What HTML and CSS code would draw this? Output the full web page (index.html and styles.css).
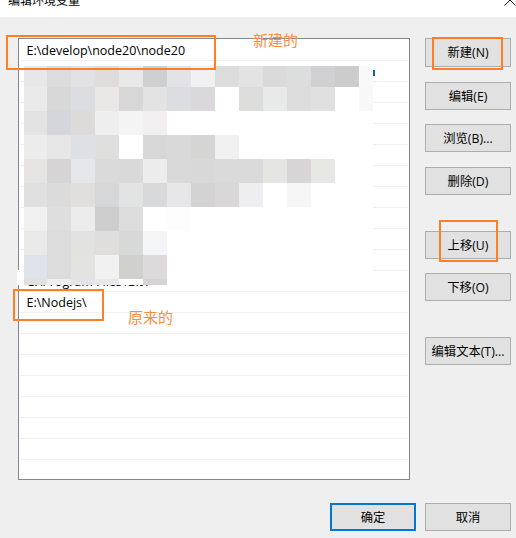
FILE: index.html
```html
<!DOCTYPE html>
<html lang="zh-CN">
<head>
<meta charset="utf-8">
<title>编辑环境变量</title>
<link rel="stylesheet" href="styles.css">
</head>
<body>
<div class="page">
  <header class="titlebar">
    <span class="title">编辑环境变量</span>
    <svg class="close" width="12" height="6" viewBox="0 0 12 6" aria-hidden="true"><path d="M0.5 5.5 L6 0 L11.5 5.5" fill="none" stroke="#111" stroke-width="1"/></svg>
  </header>
  <main class="dialog">
    <div class="content">
      <div class="list">
        <div class="row">E:\develop\node20\node20</div>
        <div class="row"></div><div class="row"></div><div class="row"></div><div class="row"></div><div class="row"></div>
        <div class="row"></div><div class="row"></div><div class="row"></div><div class="row"></div><div class="row"></div>
        <div class="row">C:\Program Files\Git\</div>
        <div class="row">E:\Nodejs\</div>
        <div class="row"></div><div class="row"></div><div class="row"></div><div class="row"></div><div class="row"></div><div class="row"></div><div class="row"></div>
      </div>
      <div class="actions">
        <button class="btn first">新建(N)</button>
        <button class="btn gap-15">编辑(E)</button>
        <button class="btn gap-14">浏览(B)...</button>
        <button class="btn gap-15">删除(D)</button>
        <button class="btn gap-36">上移(U)</button>
        <button class="btn gap-14">下移(O)</button>
        <button class="btn gap-36">编辑文本(T)...</button>
      </div>
    </div>
    <footer class="footer">
      <button class="btn primary">确定</button>
      <button class="btn">取消</button>
    </footer>
  </main>

  <svg class="mosaic" width="358" height="219" viewBox="17 66 358 219" shape-rendering="crispEdges" aria-hidden="true">
    <rect x="24" y="66" width="349" height="219" fill="#fff"/>
    <rect x="17" y="270" width="7" height="15" fill="#fff"/>
    <rect x="373" y="70" width="2" height="6" fill="#1f5f9a"/>
    <g>
      <rect x="24" y="66" width="23" height="21" fill="#e7e7e7"/><rect x="47" y="66" width="24" height="21" fill="#dcdcdc"/><rect x="71" y="66" width="24" height="21" fill="#e1e1e3"/><rect x="95" y="66" width="24" height="21" fill="#e0dcdc"/><rect x="119" y="66" width="24" height="21" fill="#e8e8e8"/><rect x="143" y="66" width="24" height="21" fill="#cdcfd0"/><rect x="167" y="66" width="24" height="21" fill="#e3e3e5"/><rect x="191" y="66" width="24" height="21" fill="#f1f1f1"/><rect x="215" y="66" width="24" height="21" fill="#dcdcdc"/><rect x="239" y="66" width="24" height="21" fill="#e3e3e3"/><rect x="263" y="66" width="24" height="21" fill="#dadada"/><rect x="287" y="66" width="24" height="21" fill="#dcdedd"/><rect x="311" y="66" width="24" height="21" fill="#d1d1d3"/><rect x="335" y="66" width="24" height="21" fill="#cccccc"/><rect x="359" y="66" width="14" height="21" fill="#f9f9f9"/>
    </g>
    <g>
      <rect x="24" y="87" width="23" height="24" fill="#eaeaea"/><rect x="47" y="87" width="24" height="24" fill="#d8d8d8"/><rect x="71" y="87" width="24" height="24" fill="#dcdde0"/><rect x="95" y="87" width="24" height="24" fill="#e9e8e6"/><rect x="119" y="87" width="24" height="24" fill="#d7d7d7"/><rect x="143" y="87" width="24" height="24" fill="#e3e3e3"/><rect x="167" y="87" width="24" height="24" fill="#dcdde0"/><rect x="191" y="87" width="24" height="24" fill="#dad8db"/><rect x="239" y="87" width="24" height="24" fill="#dcdcda"/><rect x="263" y="87" width="24" height="24" fill="#e8eae9"/><rect x="287" y="87" width="24" height="24" fill="#dcdcdc"/><rect x="311" y="87" width="24" height="24" fill="#e0e0e0"/><rect x="359" y="87" width="14" height="24" fill="#f8f8f8"/>
    </g>
    <g>
      <rect x="24" y="111" width="23" height="24" fill="#e3e3e3"/><rect x="47" y="111" width="24" height="24" fill="#d5d6d9"/><rect x="71" y="111" width="24" height="24" fill="#dcdbd9"/><rect x="95" y="111" width="24" height="24" fill="#eeeeee"/><rect x="119" y="111" width="24" height="24" fill="#f4f4f4"/><rect x="143" y="111" width="24" height="24" fill="#f1eff0"/>
    </g>
    <g>
      <rect x="24" y="135" width="23" height="24" fill="#ececec"/><rect x="47" y="135" width="24" height="24" fill="#e6e6e6"/><rect x="71" y="135" width="24" height="24" fill="#dee0e3"/><rect x="95" y="135" width="24" height="24" fill="#dfdfdd"/><rect x="143" y="135" width="24" height="24" fill="#d7d7d7"/><rect x="167" y="135" width="24" height="24" fill="#d9d9d9"/><rect x="191" y="135" width="24" height="24" fill="#d5d5d3"/><rect x="215" y="135" width="24" height="24" fill="#f0f0f0"/>
    </g>
    <g>
      <rect x="24" y="159" width="23" height="24" fill="#e6e5e3"/><rect x="47" y="159" width="24" height="24" fill="#d6d4d5"/><rect x="71" y="159" width="24" height="24" fill="#e4e6e9"/><rect x="95" y="159" width="24" height="24" fill="#dadada"/><rect x="119" y="159" width="24" height="24" fill="#d9d9d9"/><rect x="143" y="159" width="24" height="24" fill="#ececec"/><rect x="167" y="159" width="24" height="24" fill="#d9d9d9"/><rect x="191" y="159" width="24" height="24" fill="#d8d8d8"/><rect x="215" y="159" width="24" height="24" fill="#dadada"/><rect x="239" y="159" width="24" height="24" fill="#dadada"/><rect x="263" y="159" width="24" height="24" fill="#e5e5e3"/><rect x="287" y="159" width="24" height="24" fill="#d7d5d6"/><rect x="311" y="159" width="24" height="24" fill="#e7e8e3"/>
    </g>
    <g>
      <rect x="24" y="183" width="23" height="24" fill="#e0e0e0"/><rect x="47" y="183" width="24" height="24" fill="#dbdbdb"/><rect x="71" y="183" width="24" height="24" fill="#e0dfdd"/><rect x="95" y="183" width="24" height="24" fill="#d6d7d9"/><rect x="119" y="183" width="24" height="24" fill="#e2e4e3"/><rect x="143" y="183" width="24" height="24" fill="#d8d9db"/><rect x="167" y="183" width="24" height="24" fill="#e6e6e8"/><rect x="191" y="183" width="24" height="24" fill="#d3d3d3"/><rect x="215" y="183" width="24" height="24" fill="#d9d7d8"/><rect x="239" y="183" width="24" height="24" fill="#eeeef0"/><rect x="287" y="183" width="24" height="24" fill="#f6f6f6"/>
    </g>
    <g>
      <rect x="24" y="207" width="23" height="24" fill="#f0f0f0"/><rect x="47" y="207" width="24" height="24" fill="#dedede"/><rect x="71" y="207" width="24" height="24" fill="#ebebeb"/><rect x="95" y="207" width="24" height="24" fill="#cdcdcd"/><rect x="119" y="207" width="24" height="24" fill="#dcdcdc"/><rect x="167" y="207" width="24" height="24" fill="#fdfdfd"/>
    </g>
    <g>
      <rect x="24" y="231" width="23" height="24" fill="#eaeae8"/><rect x="47" y="231" width="24" height="24" fill="#dcdcdc"/><rect x="71" y="231" width="24" height="24" fill="#e2e2e0"/><rect x="95" y="231" width="24" height="24" fill="#dfdedc"/><rect x="119" y="231" width="24" height="24" fill="#d7d9d8"/><rect x="143" y="231" width="24" height="24" fill="#f4f5f7"/>
    </g>
    <g>
      <rect x="24" y="255" width="23" height="24" fill="#dfe4ea"/><rect x="47" y="255" width="24" height="24" fill="#dcdcdc"/><rect x="71" y="255" width="24" height="24" fill="#e3e3e1"/><rect x="95" y="255" width="24" height="24" fill="#f1f1f1"/><rect x="119" y="255" width="24" height="24" fill="#d0d0ce"/><rect x="143" y="255" width="24" height="24" fill="#dcdadb"/>
    </g>
    <g>
      <rect x="24" y="279" width="23" height="6" fill="#e3e0dd"/><rect x="47" y="279" width="24" height="6" fill="#eeeeee"/><rect x="71" y="279" width="24" height="6" fill="#e4e4e8"/><rect x="95" y="279" width="24" height="6" fill="#e8e8e8"/><rect x="143" y="279" width="24" height="6" fill="#d6d4d5"/>
    </g>
  </svg>

  <div class="mark mark-path"></div>
  <div class="mark mark-new"></div>
  <div class="mark mark-up"></div>
  <div class="mark mark-old"></div>
  <span class="note note-new">新建的</span>
  <span class="note note-old">原来的</span>
</div>
</body>
</html>
```
FILE: styles.css
```css
* { box-sizing: border-box; }
html, body { margin: 0; padding: 0; }
body { font-family: "Open Sans", "Noto Sans CJK SC", sans-serif; font-size: 12px; color: #000; background: #efefef; }
.page { position: relative; width: 516px; height: 538px; overflow: hidden; display: flex; flex-direction: column; }

.titlebar { height: 17px; flex: none; background: #fff; display: flex; justify-content: space-between; align-items: flex-start; padding: 0 0 0 8px; overflow: hidden; }
.title { display: block; line-height: 16px; margin-top: -7px; }
.close { display: block; flex: none; }

.dialog { flex: 1; background: #efefef; padding: 21px 5px 7px 18px; display: flex; flex-direction: column; }
.content { display: flex; gap: 15px; align-items: flex-start; }

.list { width: 392px; height: 442px; flex: none; background: #fff; border: 1px solid #82878f; padding: 1px 1px 0; }
.row { height: 21px; padding: 1px 0 0 6.5px; font-size: 12.5px; line-height: 19px; border-bottom: 1px solid #f0f0f0; white-space: nowrap; }

.actions { width: 86px; display: flex; flex-direction: column; }
.btn { display: block; width: 86px; height: 28px; padding: 0 0 1px; background: #e1e1e1; border: 1px solid #adadad; border-radius: 0; font: inherit; font-size: 12.3px; color: #000; text-align: center; }
.first { height: 29px; }
.gap-14 { margin-top: 14px; }
.gap-15 { margin-top: 15px; }
.gap-36 { margin-top: 36px; }

.footer { margin-top: auto; display: flex; justify-content: flex-end; gap: 9px; }
.primary { border: 2px solid #0078d7; }

.mosaic { position: absolute; left: 17px; top: 66px; display: block; }

.mark { position: absolute; border: 2px solid #ff7f27; }
.mark-path { left: 6px; top: 35px; width: 210px; height: 35px; }
.mark-new { left: 432px; top: 37px; width: 71px; height: 33px; }
.mark-up { left: 439px; top: 220px; width: 59px; height: 42px; }
.mark-old { left: 13px; top: 289px; width: 91px; height: 32px; }

.note { position: absolute; font-size: 15px; line-height: 18px; color: #ff8c3c; }
.note-new { left: 253px; top: 31px; }
.note-old { left: 128px; top: 308px; }
```
